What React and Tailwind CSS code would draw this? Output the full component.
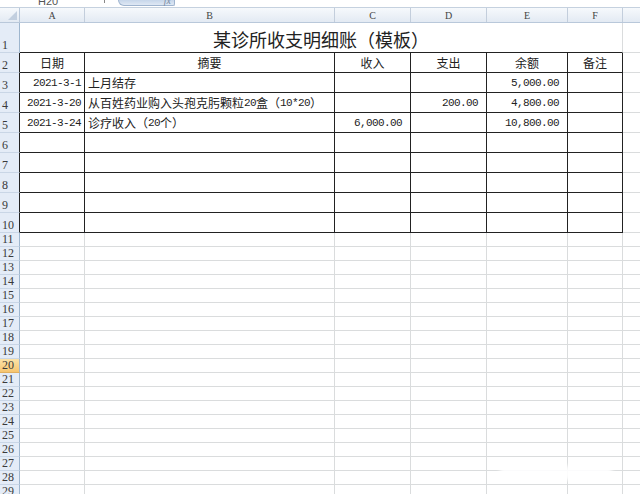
import React from 'react';

// column widths: A..F, G takes the rest
const COLS = ['w-[65px]', 'w-[250px]', 'w-[76px]', 'w-[76px]', 'w-[81px]', 'w-[55px]'];
const LETTERS = ['A', 'B', 'C', 'D', 'E', 'F'];

const ROWS = [
    { head: true, cells: ['日期', '摘要', '收入', '支出', '余额', '备注'] },
    { cells: ['2021-3-1', '上月结存', '', '', '5,000.00', ''] },
    { cells: ['2021-3-20', '从百姓药业购入头孢克肟颗粒20盒（10*20）', '', '200.00', '4,800.00', ''] },
    { cells: ['2021-3-24', '诊疗收入（20个）', '6,000.00', '', '10,800.00', ''] },
    { cells: ['', '', '', '', '', ''] },
    { cells: ['', '', '', '', '', ''] },
    { cells: ['', '', '', '', '', ''] },
    { cells: ['', '', '', '', '', ''] },
    { cells: ['', '', '', '', '', ''] },
];

const cjk = "font-['Noto_Sans_CJK_SC',sans-serif]";
const mono = "font-['Liberation_Mono','DejaVu_Sans_Mono',monospace] text-[11px] tracking-[-0.6px]";

// ascii runs get the narrow mono face, like SimSun's half-width digits
const Mixed = ({ text }) =>
    text.split(/([\x00-\x7f]+)/).map((part, i) =>
        /^[\x00-\x7f]+$/.test(part) ? (
            <span key={i} className={mono}>{part}</span>
        ) : (
            <span key={i}>{part}</span>
        )
    );

const RowHeader = ({ n, height, table, active }) => (
    <div
        className={`${height} w-[20px] shrink-0 flex items-end pl-[2px] pb-[1px] border-b border-r ${
            active ? 'bg-gradient-to-b from-[#fbe3a8] to-[#f6c56f] border-b-[#e0b060]' : 'bg-[#e4ecf7] border-b-[#c9d6e6]'
        } ${table ? 'border-r-[#222]' : 'border-r-[#9eb6ce]'} font-['Liberation_Serif',serif] text-[12px] leading-[12px] text-[#3a3a3a]`}
    >
        {n}
    </div>
);

const EmptyRow = ({ n }) => (
    <div className="flex">
        <RowHeader n={n} height="h-[14px]" active={n === 20} />
        {COLS.map((w, i) => (
            <div key={i} className={`${w} h-[14px] shrink-0 border-r border-b border-[#dadcdd]`} />
        ))}
        <div className="flex-1 h-[14px] border-b border-[#dadcdd]" />
    </div>
);

export default function App() {
    return (
        <div className={`relative w-[640px] h-[494px] overflow-hidden bg-white ${cjk}`}>
            {/* formula bar, mostly scrolled off */}
            <div className="h-[8px] flex items-end border-b border-[#c5d1df] bg-white overflow-hidden">
                <div className="w-[108px] h-[8px] relative">
                    <span className="absolute left-[38px] -top-[6px] font-['Liberation_Sans',sans-serif] text-[11px] text-[#555]">H20</span>
                    <span className="absolute left-[104px] top-0 w-[1px] h-[4px] bg-[#888]" />
                </div>
                <div className="ml-[10px] w-[57px] h-[6px] self-start rounded-bl-[6px] rounded-br-[2px] bg-gradient-to-b from-[#c6d6ea] to-[#dfe8f4] border border-t-0 border-[#9fb4cf] relative">
                    <span className="absolute right-[3px] -top-[7px] font-['Liberation_Serif',serif] italic text-[10px] text-[#7a8aa0]">fx</span>
                </div>
            </div>

            {/* column letters */}
            <div className="flex h-[15px] bg-gradient-to-b from-[#f6f9fc] to-[#e3eaf3] border-b border-[#b9c8da]">
                <div className="w-[20px] shrink-0 border-r border-[#b9c8da] relative">
                    <div className="absolute right-[2px] bottom-[2px] w-0 h-0 border-l-[9px] border-l-transparent border-b-[9px] border-b-[#c2cfdf]" />
                </div>
                {COLS.map((w, i) => (
                    <div
                        key={i}
                        className={`${w} shrink-0 border-r border-[#c3cedc] flex items-center justify-center font-['Liberation_Serif',serif] text-[10px] text-[#444]`}
                    >
                        {LETTERS[i]}
                    </div>
                ))}
                <div className="flex-1" />
            </div>

            {/* row 1: merged title */}
            <div className="flex">
                <RowHeader n={1} height="h-[30px]" />
                <div className="w-[603px] h-[30px] shrink-0 flex items-end justify-center pb-[4px] border-r border-r-[#dadcdd] border-b border-b-[#222] text-[18px] leading-[18px] text-[#222]">
                    某诊所收支明细账（模板）
                </div>
                <div className="flex-1 h-[30px] border-b border-[#dadcdd]" />
            </div>

            {/* ledger table, rows 2-10 */}
            {ROWS.map((row, r) => (
                <div key={r} className="flex">
                    <RowHeader n={r + 2} height="h-[20px]" table />
                    {row.cells.map((c, i) => {
                        const num = i !== 1;
                        const align = row.head
                            ? 'justify-center'
                            : i === 0
                            ? 'justify-end pr-[3px]'
                            : num
                            ? 'justify-end pr-[8px]'
                            : 'justify-start pl-[3px]';
                        return (
                            <div
                                key={i}
                                className={`${COLS[i]} h-[20px] shrink-0 flex items-center ${align} border-r border-b border-[#222] text-[12px] leading-[14px] text-[#222] whitespace-nowrap`}
                            >
                                {row.head ? c : num ? <span className={mono}>{c}</span> : <Mixed text={c} />}
                            </div>
                        );
                    })}
                    <div className="flex-1 h-[20px] border-b border-[#dadcdd]" />
                </div>
            ))}

            {/* empty grid */}
            {Array.from({ length: 19 }, (_, i) => (
                <EmptyRow key={i} n={i + 11} />
            ))}

            {/* faint watermark smudge */}
            <div className="absolute left-[500px] top-[466px] w-[112px] h-[14px] bg-white/90 blur-[2px]" />
        </div>
    );
}
